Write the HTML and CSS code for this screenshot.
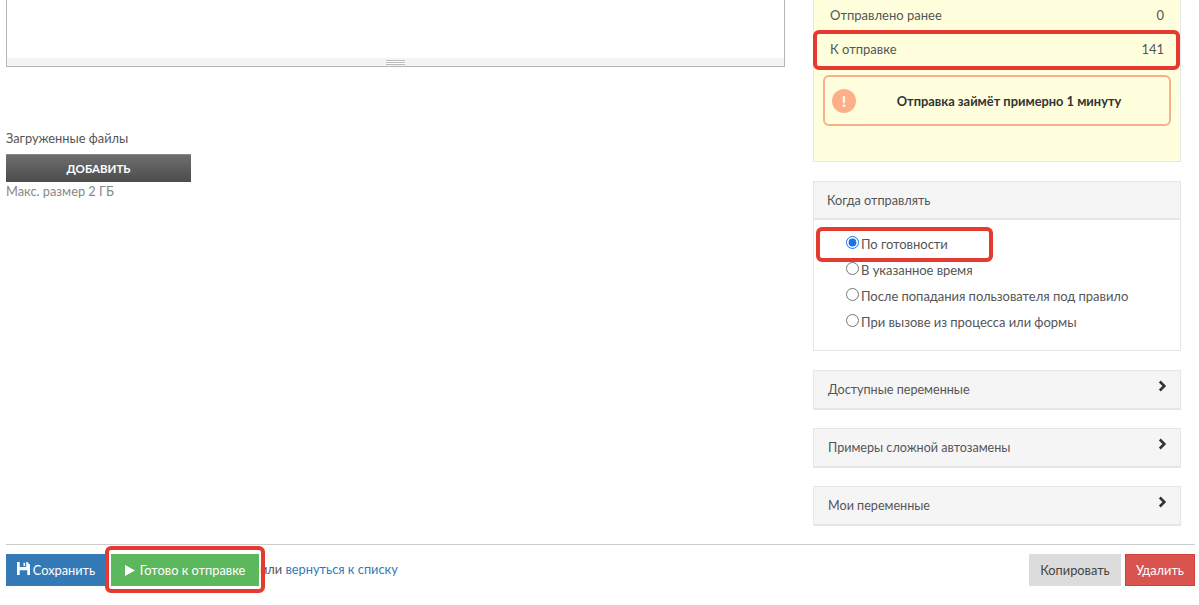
FILE: index.html
```html
<!DOCTYPE html>
<html lang="ru">
<head>
<meta charset="utf-8">
<title>Рассылка</title>
<link rel="stylesheet" href="styles.css">
</head>
<body>
<main class="columns">
  <section class="left">
    <div class="editor">
      <div class="editor-body"></div>
      <div class="editor-status"><span class="grip"></span></div>
    </div>
    <div class="files">
      <div class="files-label">Загруженные файлы</div>
      <button class="add-btn">ДОБАВИТЬ</button>
      <div class="files-hint">Макс. размер 2 ГБ</div>
    </div>
  </section>
  <aside class="right">
    <div class="stats">
      <div class="stat-row"><span>Отправлено ранее</span><span>0</span></div>
      <div class="stat-row stat-mark"><span>К отправке</span><span>141</span></div>
      <div class="notice">
        <span class="notice-icon">!</span>
        <strong class="notice-text">Отправка займёт примерно 1 минуту</strong>
      </div>
    </div>
    <div class="panel when">
      <div class="panel-head">Когда отправлять</div>
      <div class="panel-body">
        <label class="radio radio-mark"><input type="radio" name="when" checked>По готовности</label>
        <label class="radio"><input type="radio" name="when">В указанное время</label>
        <label class="radio"><input type="radio" name="when">После попадания пользователя под правило</label>
        <label class="radio"><input type="radio" name="when">При вызове из процесса или формы</label>
      </div>
    </div>
    <div class="panel fold"><span>Доступные переменные</span><svg class="chev" viewBox="0 0 9 12"><path d="M1.800 1.500 6.300 6 1.800 10.500" fill="none" stroke="#333" stroke-width="2.600"/></svg></div>
    <div class="panel fold"><span>Примеры сложной автозамены</span><svg class="chev" viewBox="0 0 9 12"><path d="M1.800 1.500 6.300 6 1.800 10.500" fill="none" stroke="#333" stroke-width="2.600"/></svg></div>
    <div class="panel fold"><span>Мои переменные</span><svg class="chev" viewBox="0 0 9 12"><path d="M1.800 1.500 6.300 6 1.800 10.500" fill="none" stroke="#333" stroke-width="2.600"/></svg></div>
  </aside>
</main>
<footer class="footer">
  <div class="actions">
    <button class="btn btn-blue"><svg class="ico" viewBox="0 0 12 12"><path fill="#fff" fill-rule="evenodd" d="M0 0h9.500L12 2.500V12H0zM2.500 0v4.500h6V0zM6 .8h1.500v2.800H6zM2.500 7.500V12h7V7.500z"/></svg>Сохранить</button>
    <button class="btn btn-green"><svg class="ico-play" viewBox="0 0 10 11"><path fill="#fff" d="M0 0 10 5.500 0 11z"/></svg>Готово к отправке</button>
    <span class="or">или <a href="#">вернуться к списку</a></span>
  </div>
  <div class="actions">
    <button class="btn btn-grey">Копировать</button>
    <button class="btn btn-red">Удалить</button>
  </div>
</footer>
</body>
</html>
```
FILE: styles.css
```css
*, *::after { box-sizing: border-box; }
html, body { margin: 0; height: 605px; overflow: hidden; background: #fff; }
body { padding: 0 4px 0 6px; font-family: "Lato", "Open Sans", sans-serif; font-size: 13px; color: #555; }
button { font-family: inherit; cursor: pointer; }

.columns { display: flex; height: 544px; }
.left { width: 779px; }
.right { width: 368px; margin-left: 28px; }

.editor { height: 67px; border: 1px solid #b5b5b5; border-top: 0; display: flex; flex-direction: column; }
.editor-body { flex: 1; }
.editor-status { height: 8px; background: #f4f4f4; display: flex; justify-content: center; align-items: center; }
.grip { width: 19px; height: 5px; border-top: 1px solid #bbb; border-bottom: 1px solid #bbb; background: linear-gradient(#fff 0 1px, #bbb 1px 2px, #fff 2px); }

.files { margin-top: 63px; font-size: 12.800px; }
.files-label { line-height: 17px; color: #555; }
.add-btn { display: block; margin-top: 7px; width: 185px; height: 28px; border: 0; border-top: 1px solid #888; background: linear-gradient(#6e6e6e, #4c4c4c); color: #fff; font-size: 11.500px; font-weight: 700; }
.files-hint { line-height: 18px; color: #888; }

.stats { height: 162px; background: #ffffdd; border: 1px solid #e6e6e6; border-top: 0; padding-top: 5px; }
.stat-row { display: flex; justify-content: space-between; height: 26px; line-height: 20px; padding: 0 16px; color: #555; }
.stat-mark { position: relative; padding-top: 8px; height: 38px; }
.stat-mark::after { content: ""; position: absolute; left: -1px; top: -1px; width: 367px; height: 40px; border: 4px solid #e43a2f; border-radius: 6px; }
.notice { display: flex; align-items: center; margin: 6px 9px 0; height: 51px; padding: 0 7px; border: 2px solid #f7b08c; border-radius: 6px; }
.notice-icon { width: 24px; height: 24px; flex: none; border-radius: 50%; background: #fdb088; color: #fff; font-weight: 700; font-size: 16px; line-height: 24px; text-align: center; }
.notice-text { flex: 1; text-align: center; font-size: 12.850px; color: #333; font-weight: 700; }

.panel { border: 1px solid #e6e6e6; }
.when { margin-top: 19px; height: 170px; }
.panel-head { height: 38px; line-height: 37px; padding-left: 13px; background: #f5f5f5; border-bottom: 2px solid #e6e6e6; font-size: 12.700px; }
.panel-body { padding-top: 11px; }
.radio { display: flex; align-items: center; height: 26px; padding-left: 32px; position: relative; color: #555; letter-spacing: -.04px; }
.radio input { width: 13px; height: 13px; margin: 0 2px 3px 0; accent-color: #1a73e8; }
.radio-mark::after { content: ""; position: absolute; left: 2px; top: -4px; width: 177px; height: 35px; border: 4px solid #e43a2f; border-radius: 6px; }

.fold { display: flex; justify-content: space-between; margin-top: 18px; height: 40px; padding: 0 13px 0 14px; line-height: 37px; background: #f5f5f5; border-bottom-width: 2px; font-size: 12.600px; }
.when + .fold { margin-top: 19px; }
.chev { width: 9px; height: 12px; margin-top: 9px; }

.footer { display: flex; justify-content: space-between; height: 61px; padding-top: 9px; border-top: 1px solid #ccc; }
.actions { display: flex; align-items: flex-start; }
.btn { height: 32px; border: 1px solid transparent; font-size: 12.800px; display: flex; align-items: center; justify-content: center; padding: 0; }
.btn-blue { width: 100px; background: #337ab7; color: #fff; }
.btn-green { width: 148px; margin: 0 0 0 5px; background: #5cb85c; color: #fff; position: relative; }
.btn-green::after { content: ""; position: absolute; left: -7px; top: -9px; width: 160px; height: 47px; border: 4px solid #e43a2f; border-radius: 6px; }
.ico { width: 13px; height: 13px; margin: 0 3px 3px 0; }
.ico-play { width: 10px; height: 11px; margin-right: 5px; }
.or { margin-left: 1px; line-height: 30px; color: #555; font-size: 12.800px; }
.or a { color: #337ab7; text-decoration: none; }
.btn-grey { width: 92px; background: #dcdcdc; color: #444; }
.btn-red { width: 70px; margin-left: 4px; background: #d9534f; color: #fff; border-color: #d43f3a; }
```
